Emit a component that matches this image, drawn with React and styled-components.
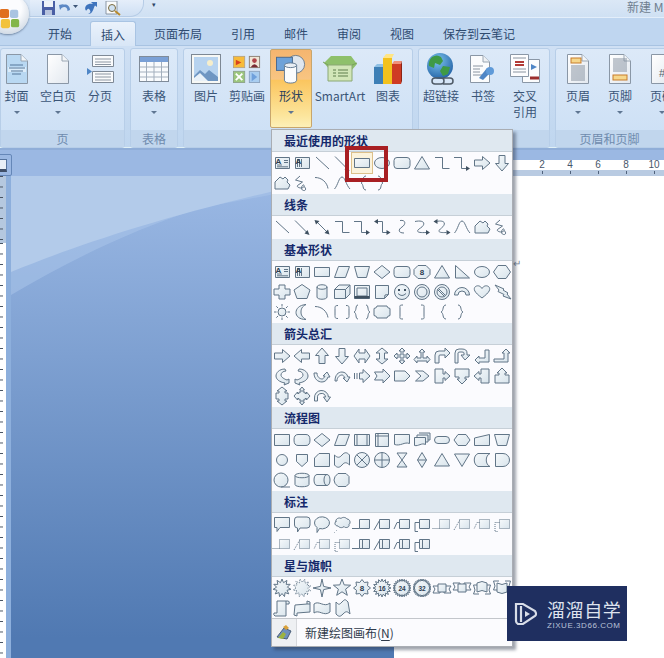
import React from 'react';
import styled, { createGlobalStyle, css } from 'styled-components';

const Global = createGlobalStyle`
  html, body { margin: 0; padding: 0; width: 664px; height: 658px; overflow: hidden; background: #7fa0cc; }
  * { box-sizing: border-box; }
`;
const FONT = `"Noto Sans CJK SC", "Noto Sans", sans-serif`;

const Window = styled.div`
  position: relative; width: 664px; height: 658px; overflow: hidden;
  display: flex; flex-direction: column; font: 12px/16px ${FONT}; color: #3d5674;
`;
const TitleBar = styled.div`
  height: 18px; flex: none; display: flex; align-items: flex-start; justify-content: space-between;
  background: linear-gradient(#dbe8f6, #cfe0f3); border-bottom: 1px solid #e3eefa; position: relative;
`;
const OfficeOrb = styled.div`
  position: absolute; left: -13px; top: -6px; width: 42px; height: 40px; border-radius: 50%;
  background: radial-gradient(circle at 50% 35%, #fbfcfe 40%, #d2dbe5 78%, #94a4b6 100%);
  box-shadow: 0 1px 2px rgba(60,80,110,.6); display: flex; align-items: center; justify-content: center;
  padding: 9px 0 0 3px; z-index: 3;
`;
const Qat = styled.div`
  margin-left: 30px; width: 114px; height: 17px; display: flex; align-items: center;
  background: linear-gradient(#e5eefa, #cedff3); border: 1px solid #b6cce6; border-left: none; border-top: none;
  border-radius: 0 0 14px 0; padding-left: 9px;
`;
const QatSlot = styled.span` display: flex; justify-content: center; width: ${p => p.$w}px; flex: none; `;
const TitleLeft = styled.div` display: flex; align-items: flex-start; `;
const QatMore = styled.div` margin: 1px 0 0 6px; width: 8px; color: #2e4566; font-size: 7px; line-height: 7px; text-align: center; `;
const TitleText = styled.div` color: #6f7e8f; font-size: 12px; line-height: 14px; width: 37px; white-space: nowrap; `;

const TabRow = styled.div`
  height: 28px; flex: none; display: flex; gap: 7px; padding: 3px 0 0 37px; background: #bfd6f0;
  border-bottom: 1px solid #a8c3e2;
`;
const Tab = styled.div`
  height: 25px; padding: 0 10px; display: flex; align-items: center; color: #2f4b70; white-space: nowrap;
  border: 1px solid transparent; border-bottom: none; border-radius: 3px 3px 0 0;
  ${p => p.$active && css`
    background: linear-gradient(#eaf2fb, #d7e5f6); border-color: #a9c4e3; margin-bottom: -1px; height: 26px;
  `}
`;
const Ribbon = styled.div`
  height: 102px; flex: none; display: flex; gap: 5px; padding: 2px 0 0; background: linear-gradient(#cfe0f4, #bfd6ef);
  border-bottom: 1px solid #dff0f6;
`;
const Group = styled.div`
  width: ${p => p.$w}px; height: 100px; flex: none; display: flex; flex-direction: column;
  border: 1px solid #b7cee8; border-radius: 3px; background: linear-gradient(#dce9f8, #cbdff5); overflow: hidden;
`;
const GroupBody = styled.div` height: 81px; flex: none; display: flex; padding-left: ${p => p.$pad || 0}px; `;
const GroupLabel = styled.div`
  flex: 1; background: #c1d6ed; color: #6f8bad; text-align: center; line-height: 17px; padding-right: ${p => p.$pr || 0}px;
`;
const RibbonButton = styled.div`
  width: ${p => p.$w}px; flex: none; height: 79px; display: flex; flex-direction: column; align-items: center; white-space: nowrap;
  padding-top: 2px; color: #3a5577; line-height: 16px; border: 1px solid transparent; border-radius: 2px;
  ${p => p.$on && css`
    border-color: #c8a66c;
    background: linear-gradient(#f5b56f 0%, #f8c582 38%, #fbc55e 39%, #fce59c 85%, #fdf0b8 100%);
    color: #2b3f5c;
  `}
`;
const IconBox = styled.div` height: 33px; display: flex; align-items: center; justify-content: center; flex: none; `;
const ButtonLabel = styled.div` text-align: center; margin-top: 3px; `;
const Caret = styled.div`
  margin-top: 7px; width: 0; height: 0; border: 3px solid transparent; border-top: 3px solid #5f7692; border-bottom: none;
`;

const Workspace = styled.div`
  flex: 1; position: relative; display: flex; flex-direction: column;
  background: linear-gradient(#a0bde8 0, #5079b2 490px);
`;
const WaveArt = styled.svg` position: absolute; left: 0; top: 28px; pointer-events: none; overflow: visible; `;
const TopBand = styled.div`
  height: 28px; flex: none; position: relative; background: #9bb8e3; border-top: 2px solid #90aed8;
`;
const Corner = styled.div`
  position: absolute; left: -1px; top: 4px; width: 13px; height: 22px; border: 1px solid #6587b8; border-radius: 0 2px 2px 0;
  display: flex; align-items: center;
`;
const CornerGlyph = styled.div` width: 7px; height: 13px; border: 1px solid #56749f; border-left: none; border-bottom: 3px solid #3f4f68; background: #e8eff7; `;
const HRuler = styled.div`
  position: absolute; left: 394px; right: 0; top: 10px; height: 10px; background: #fff; display: flex; padding-left: 134px;
`;
const HRulerLower = styled.div`
  position: absolute; left: 394px; right: 0; top: 20px; height: 6px; background: #b9cbe2; display: flex; padding-left: 134px;
`;
const HCell = styled.div`
  width: 28px; flex: none; text-align: center; font: 10px/10px "Liberation Sans", sans-serif; color: #47566a;
`;
const HTick = styled.div`
  width: 28px; flex: none; display: flex; justify-content: center;
  &::after { content: ""; width: 1px; height: 3px; margin-top: 1px; background: #50627c; }
`;
const DocRow = styled.div` flex: 1; display: flex; position: relative; `;
const VRuler = styled.div` width: 6px; flex: none; display: flex; flex-direction: column; `;
const rulerTicks = base => css`
  background-color: ${base};
  background-image: linear-gradient(#45505e 0 1px, transparent 1px);
  background-size: 3px 10.500px;
  background-repeat: repeat-y;
`;
const VRulerGray = styled.div` height: 67px; flex: none; ${rulerTicks('#b5c8df')} `;
const VRulerWhite = styled.div` flex: 1; ${rulerTicks('#fff')} `;
const Gutter = styled.div` flex: 1; position: relative; border-left: 5px solid #8dafdc; `;
const Page = styled.div` width: 270px; flex: none; background: #fff; position: relative; padding: 79px 0 0 119px; color: #7d8a99; font-size: 10px; line-height: 16px; `;

const Menu = styled.div`
  position: absolute; left: 271px; top: 129px; width: 242px; height: 518px; background: #fbfbfe;
  border: 1px solid #a9adb3; box-shadow: 3px 3px 3px rgba(40,50,70,.45); z-index: 5;
`;
const MenuHeader = styled.div`
  height: 22px; padding-left: 12px; font-weight: 700; line-height: 22px; color: #15296b; background: #dfe8f0;
  border-bottom: 1px solid #c6cfd7;
`;
const ShapeGrid = styled.div`
  display: grid; grid-template-columns: repeat(12, 20px); grid-auto-rows: 20px; padding: 1px 0; min-height: ${p => p.$min || 0}px;
`;
const ShapeCell = styled.div`
  width: 20px; height: 20px; display: flex; align-items: center; justify-content: center; position: relative;
  ${p => p.$hot && css`
    background: #fbf3dc; outline: 1px solid #dcc08a;
    &::before {
      content: ""; position: absolute; left: -7px; top: -7px; width: 35px; height: 28px; border: 4px solid #a81f23; z-index: 2;
    }
  `}
`;
const MenuFooter = styled.div`
  height: 28px; display: flex; align-items: stretch; border-top: 1px solid #c3c6cb; position: relative; top: -1px;
`;
const FooterIcon = styled.div` width: 25px; flex: none; background: #eef0f3; border-right: 1px solid #d6d8dc; display: flex; align-items: center; justify-content: center; `;
const FooterText = styled.div` padding-left: 8px; line-height: 28px; color: #2f3a4a; u { text-underline-offset: 2px; } `;

const Watermark = styled.div`
  position: absolute; left: 507px; top: 586px; width: 120px; height: 55px; background: #1f2f60; z-index: 6;
  display: flex; align-items: center; padding-left: 7px; gap: 8px;
`;
const MarkText = styled.div` display: flex; flex-direction: column; gap: 1px; color: #dfe4ef; `;
const MarkTitle = styled.div` font-size: 18px; line-height: 22px; letter-spacing: .6px; white-space: nowrap; `;
const MarkSub = styled.div` font: 8px/9px "Liberation Sans", sans-serif; letter-spacing: .55px; color: #b9c2d8; white-space: nowrap; `;

const ShapeSvg = styled.svg`
  display: block; overflow: visible; fill: url(#sf); stroke: #617587; stroke-width: 1; stroke-linejoin: miter;
`;
const Defs = styled.svg` position: absolute; width: 0; height: 0; `;

/* ---------- shape geometry: [filled outline, open lines, solid marks, tiny text, dotted] ---------- */
const star = (n, R, r, rot = 0) => {
  let d = '';
  for (let i = 0; i < n * 2; i++) {
    const a = rot + (Math.PI * i) / n - Math.PI / 2;
    const q = i % 2 ? r : R;
    d += `${i ? 'L' : 'M'}${(10 + q * Math.cos(a)).toFixed(1)} ${(10 + q * Math.sin(a)).toFixed(1)}`;
  }
  return d + 'z';
};
const dots = { strokeDasharray: '1 1' };
const CB = 'M7.5 5.5h10v9h-10z';
const TAILS = ['M7.5 14.5H0', 'M7.5 6.5L2 16', 'M7.5 8.5H5L2 15', 'M7.5 8.5H3v9h3'];

const S = {
  text: ['M3.5 4.5h14v11h-14z', 'M5 12h5M5 13.8h11M12 7.5h4M12 9.5h4', '', 'A'],
  vtext: ['M3.5 4.5h14v11h-14z', 'M5.5 6v8M7.5 6v8M9.5 6v8', '', 'A'],
  line: ['', 'M4 4L17 16'],
  arrow: ['', 'M3 3.5L15 15.5', 'M17.5 18l-5-1.5 3-3.5z'],
  dbl: ['', 'M5 5L15 15', 'M2.5 3l5 1-3.5 3.5zM17.5 17.5l-5-1.5 3.500-3.500z'],
  elbow: ['', 'M3 4.5h7.5v11h7'],
  elbowA: ['', 'M2 4.5h7.5v11h6', 'M18 15.5l-4-2.5v5z'],
  elbowD: ['', 'M5 4.5h5.5v11h5', 'M2 4.5l4-2.5v5zM18.5 15.5l-4-2.5v5z'],
  curved: ['', 'M8 3.5c6-1 6 4 2 6.5s-4 6 2 6'],
  curvedA: ['', 'M3 4.5c10-2 11 3 5.5 6.5s-3 5 5.5 4.5', 'M18 15.5l-4-2.5v5z'],
  curvedD: ['', 'M4 4.5c10-2 10 3 5.5 6.5s-3 5 5 4.5', 'M1.5 4.5l4-2.5v5zM18.5 15.5l-4-2.5v5z'],
  curve: ['', 'M2.5 16C6 12 7 4 10 4s4 8 8 12'],
  arc2: ['', 'M3 4.5c7 0 12 5 13 11'],
  free: ['M3 16V9l5-5 3 2 2-2 3 3-1 2 3 3-2 4z'],
  scrib: ['', 'M8 3L3.5 7l7 2-5 3.5c-2 2 7 4.5 6.5 0-.5-3-5 4-.5 5 3 .5 2.5-3 .5-4'],
  lbrace: ['', 'M14 3c-4 0-2 6-5 7 3 1 1 7 5 7'],
  rbrace: ['', 'M6 3c4 0 2 6 5 7-3 1-1 7-5 7'],
  rect: ['M2.5 5.5h15v9h-15z'],
  rectHot: ['M2.5 5.5h15v9h-15z'],
  ell: ['M2.5 10a7.5 5.5 0 1 0 15 0a7.5 5.5 0 1 0-15 0z'],
  round: ['M5 4.5h10a3 3 0 0 1 3 3v5a3 3 0 0 1-3 3H5a3 3 0 0 1-3-3v-5a3 3 0 0 1 3-3z'],
  tri: ['M10 3.5L17.5 16h-15z'],
  rarrow: ['M2.5 7h8V3.5L18 10l-7.5 6.500V13h-8z'],
  larrow: ['M17.5 7h-8V3.5L2 10l7.500 6.500V13h8z'],
  uarrow: ['M7 17.5v-8H3.5L10 2l6.500 7.500H13v8z'],
  darrow: ['M7 2.5v8H3.5L10 18l6.500-7.500H13v-8z'],
  lr: ['M7 3L2 10l5 7v-4h6v4l5-7-5-7v4H7z'],
  ud: ['M10 2l6 5h-3.500v6H16l-6 5-6-5h3.500V7H4z'],
  quad: ['M10 2l3 3h-2v4h4V7l3 3-3 3v-2h-4v4h2l-3 3-3-3h2v-4H5v2l-3-3 3-3v2h4V5H7z'],
  lru: ['M10 3l3 3h-2v6h4v-2l3 3.5-3 3.5v-2H5v2l-3-3.5L5 10v2h4V6H7z'],
  bent: ['M3 17V9q0-4 4-4h6V2l5 5-5 5V9H8q-1 0-1 1v7z'],
  uturn: ['M3 17V7q0-4 4-4h3q5 0 5 4v2h3l-5 5-4-5h3V7q0-1-2-1H8q-2 0-2 1v10z'],
  bleft: ['M3 14l4-4v2h6V4h4v12H7v2z'],
  bup: ['M2 13h10V7h-2l4-4 4 4h-2v9H2z'],
  cright: ['M13 3C7 3 4 7 4 10s3 6 9 7l-1 2 5-2 0-4-2 1c-3-1-6-3-6-5s2-4 5-4z'],
  cleft: ['M7 3c6 0 9 4 9 7s-3 6-9 7l1 2-5-2v-4l2 1c3-1 6-3 6-5S9 5 6 5z'],
  cup: ['M2 7c0 6 4 9 8 9 3 0 5-2 6-5h2l-3-5-4 4h2c-1 2-2 3-3 3-2 0-5-2-5-6z'],
  cdown: ['M3 15C3 9 6 6 10 6c3 0 5 2 6 5h2l-3 5-4-4h2c-1-2-2-3-3-3-2 0-5 2-5 6z'],
  stripe: ['M7.5 7H11V3.5L18 10l-7 6.500V13H7.5z', 'M2.5 7v6M5 7v6'],
  notch: ['M2.5 6H11V3l7 7-7 7v-3H2.5L5 10z'],
  home: ['M2.5 5H13l5 5-5 5H2.5z'],
  chev: ['M3.5 5H11l6 5-6 5H3.5L9 10z'],
  rcall: ['M3 3h8v5h2V5.5L18 10l-5 4.5V12h-2v5H3z'],
  dcall: ['M3 3h14v8h-4v2h2l-5 5-5-5h2v-2H3z'],
  lcall: ['M17 3H9v5H7V5.5L2 10l5 4.5V12h2v5h8z'],
  ucall: ['M3 17h14V9h-4V7h2l-5-5-5 5h2v2H3z'],
  udcall: ['M5 7h2V5H5l5-4 5 4h-2v2h3v6h-3v2h2l-5 4-5-4h2v-2H4V7z'],
  qcall: ['M7 6h2V4H7.5L10 1l2.5 3H11v2h2v1.5h1.5V6L18 10l-3.5 4v-1.5H13V14h-2v2h1.5L10 19l-2.500-3H9v-2H7v-1.5H5.5V14L2 10l3.500-4v1.5H7z'],
  circ: ['M2.5 15v-3a7 7 0 0 1 14-1h2l-3.500 5-3.500-5h2a4 4 0 0 0-8 1v3z'],
  para: ['M6.5 4.5h11L13.5 15.500h-11z'],
  trap: ['M2.5 4.5h15l-3 11h-9z'],
  diam: ['M10 3.5L18 10l-8 6.500L2 10z'],
  oct: ['M6 3.5h8L18 7.5v5L14 16.500H6L2 12.500v-5z', '', '', '8'],
  rtri: ['M3.5 3.5L17.5 16h-14z'],
  hex: ['M6 3.5h8L18.5 10 14 16.500H6L1.500 10z'],
  cross: ['M7 3h6v4h5v6h-5v4H7v-4H2V7h5z'],
  pent: ['M10 2.5L18 8l-3 8.500H5L2 8z'],
  can: ['M5 5c0-3 10-3 10 0v10c0 3-10 3-10 0z', 'M5 5c0 3 10 3 10 0'],
  cube: ['M2.5 7.5L7 3h11v9l-4.500 4.500h-11z', 'M2.5 7.5h11v9M13.5 7.5L18 3'],
  bevel: ['M2.5 3.5h15v13h-15z', 'M5 6h10v8H5z', 'M2.5 14h15v2.500h-15z'],
  fold: ['M3.5 3.5h13v9l-4 4h-9z', 'M16.5 12.5l-3.500 .5-.5 3.500'],
  smile: ['M2.5 10a7.500 7.500 0 1 0 15 0a7.500 7.500 0 1 0-15 0z', 'M6 11.5q4 4 8 0', 'M6 7h2v2H6zM12 7h2v2h-2z'],
  donut: ['M2.5 10a7.500 7.500 0 1 0 15 0a7.500 7.500 0 1 0-15 0z', 'M5 10a5 5 0 1 0 10 0a5 5 0 1 0-10 0z'],
  nosym: ['M2.5 10a7.500 7.500 0 1 0 15 0a7.500 7.500 0 1 0-15 0z', 'M5 10a5 5 0 1 0 10 0a5 5 0 1 0-10 0zM6.500 6.500l7 7M5.500 7.500l7 7'],
  barc: ['M2.5 13a7.500 7.500 0 0 1 15 0h-3.500a4 4 0 0 0-8 0z'],
  heart: ['M10 16C2 10 1 7 3.5 4.500 6 3 8.500 4 10 6.500 11.500 4 14 3 16.500 4.500 19 7 18 10 10 16z'],
  bolt: ['M3 3l9 4-1 1 5 3-1 1 4 5-8-3 1-1.500-6-3 1-1.500z'],
  sun: ['M6 10a4 4 0 1 0 8 0a4 4 0 1 0-8 0z', 'M10 2v2.500M10 15.500V18M2 10h2.500M15.500 10H18M4.300 4.300l1.800 1.800M13.900 13.900l1.800 1.800M4.300 15.700l1.800-1.800M13.900 6.100l1.800-1.800'],
  moon: ['M14 2.5C7 3 4 7 4 10.500s3 7 10 7C10 15 9 13 9 10s1-5.500 5-7.500z'],
  brackP: ['', 'M6 3.5c-3 0-3 1-3 3v7c0 2 0 3 3 3M14 3.5c3 0 3 1 3 3v7c0 2 0 3-3 3'],
  braceP: ['', 'M6 3c-3 0-1 6-4 7 3 1 1 7 4 7M14 3c3 0 1 6 4 7-3 1-1 7-4 7'],
  plaque: ['M5 4h10q0 2 3 2.500v7Q15 14 15 16H5q0-2-3-2.500v-7Q5 6 5 4z'],
  lb: ['', 'M11 3c-4 0-3 1-3 3v8c0 2-1 3 3 3'],
  rb: ['', 'M9 3c4 0 3 1 3 3v8c0 2 1 3-3 3'],
  froll: ['M2.5 4.5h15v11h-15z'],
  ftm: ['M6 4.5h8q4 0 4 5.500t-4 5.500H6q-4 0-4-5.500T6 4.500z'],
  pred: ['M2.5 4.5h15v11h-15z', 'M5 4.5v11M15 4.5v11'],
  intr: ['M3.5 3.5h13v13h-13z', 'M6 3.5v13M3.5 6h13'],
  doc: ['M2.5 4.5h15v9c-5-2-9 3-15 1z'],
  mdoc: ['M2.5 7.5h11v7c-4-2-7 2-11 1zM5 5v2.500M5 5h11v7h-2.500M7 3h11v7h-2'],
  term: ['M6 6.5h8a3.500 3.500 0 0 1 0 7H6a3.500 3.500 0 0 1 0-7z'],
  prep: ['M6 4.5h8l4 5.500-4 5.500H6L2 10z'],
  minp: ['M2.5 8L17.5 4.500v11h-15z'],
  mop: ['M2.5 4.5h15l-3 11h-9z'],
  cir: ['M4.5 10a5.500 5.500 0 1 0 11 0a5.500 5.500 0 1 0-11 0z'],
  off: ['M4.5 4.5h11v7L10 16.500l-5.500-5z'],
  card: ['M7 3.5h10.500v13h-15V8z'],
  tape: ['M2.5 5c3 3 5 3 7.500 0s5-3 7.500 0v10c-3-3-5-3-7.500 0s-5 3-7.500 0z'],
  sum: ['M2.5 10a7.500 7.500 0 1 0 15 0a7.500 7.500 0 1 0-15 0z', 'M4.700 4.700l10.600 10.600M15.300 4.700L4.700 15.300'],
  or: ['M2.5 10a7.500 7.500 0 1 0 15 0a7.500 7.500 0 1 0-15 0z', 'M10 2.500v15M2.500 10h15'],
  coll: ['M5 3h10L5 17h10z'],
  sort: ['M10 2.5l4.500 7.500-4.500 7.500L5.500 10z', 'M5.500 10h9'],
  ext: ['M10 3.5L17.5 16h-15z'],
  mrg: ['M2.5 4h15L10 16.500z'],
  stor: ['M6 3.5h12c-5 2-5 11 0 13H6c-5-2-5-11 0-13z'],
  delay: ['M3.5 3.5H11a6.500 6.500 0 0 1 0 13H3.500z'],
  seq: ['M2 10a7 7 0 1 0 14 0a7 7 0 1 0-14 0z', 'M9 17h9'],
  disk: ['M3 5.5c0-3 14-3 14 0v9c0 3-14 3-14 0z', 'M3 5.5c0 3 14 3 14 0'],
  dirA: ['M5 4.5h10c4 0 4 11 0 11H5c-4 0-4-11 0-11z', 'M15 4.5c-4 0-4 11 0 11'],
  disp: ['M6 3.5h8l3 3v7l-3 3H6q-4-3-4-6.500t4-6.500z'],
  wcR: ['M2.5 3.5h15v10H8L5 17.500v-4H2.500z'],
  wcRo: ['M5 3h10q3 0 3 3v5q0 3-3 3H8l-2.500 4v-4q-3 0-3-3V6q0-3 2.500-3z'],
  wcE: ['M2.5 9a7.500 6 0 1 1 5 5.500L5 18.500v-5A6 6 0 0 1 2.500 9z'],
  cloud: ['M4 8c-1-3 3-5 5-3.500 2-2 5-1 6 .5 3 0 4 4 2 5.500 1 3-4 4-5 2-2 2-5 1-6-.5-3 0-4-3-2-4.500z', 'M4 16.500l.5 0M2 18.500h.5'],
  ...Object.fromEntries(TAILS.flatMap((t, i) => [
    [`l${i + 1}`, [CB, t]],
    [`d${i + 1}`, [CB, t, '', '', 1]],
    [`c${i + 1}`, [CB, `${t}`, '', '', 1]],
    [`b${i + 1}`, [CB, `${t}M10.500 5.500v9`]],
  ])),
  ex1: [star(11, 9, 5.5)],
  ex2: [star(12, 9, 5.8, .3), '', '', '', 1],
  s4: [star(4, 9, 2.2)],
  s5: [star(5, 9, 3.8)],
  s8: [star(8, 8.5, 6), '', '', '8'],
  s16: [star(16, 9, 6.3), '', '', '16'],
  s24: [star(24, 9, 6.8), '', '', '24'],
  s32: [star(32, 9, 7), '', '', '32'],
  rib1: ['M6 6h8v8H6z', 'M6 8H1l2 3-2 4h7v-1M14 8h5l-2 3 2 4h-7v-1'],
  rib2: ['M6 6h8v8H6z', 'M6 12H1l2-3-2-4h7v1M14 12h5l-2-3 2-4h-7v1'],
  crib1: ['M5 5q5-3 10 0v9q-5-3-10 0z', 'M5 7H1.500L3 12 1.500 16H7M15 7h3.500L17 12l1.500 4H13'],
  crib2: ['M5 14q5 3 10 0V5q-5 3-10 0z', 'M5 12H1.500L3 8 1.500 3H7M15 12h3.500L17 8l1.500-5H13'],
  vscr: ['M5 3h11q2 0 1 3h-3v12H3q-2-1-1-3h3z', 'M14 6V3'],
  hscr: ['M3 7l12-1V3l3 1v10L5 15v3l-3-1z', 'M15 6h3'],
  wave: ['M2 6c5-4 10 4 16-1v9c-6 5-11-3-16 1z'],
  dwave: ['M4 4c3 3 3 3 6 0s3-3 6 0l2 12c-3-3-4-3-7 0s-4 3-7 0z'],
};

const sections = [
  ['最近使用的形状', ['text','vtext','line','arrow','HOT','ell','round','tri','elbow','elbowA','rarrow','darrow','free','scrib','arc2','curve','lbrace','rbrace']],
  ['线条', ['line','arrow','dbl','elbow','elbowA','elbowD','curved','curvedA','curvedD','curve','free','scrib'], 23],
  ['基本形状', ['text','vtext','rect','para','trap','diam','round','oct','tri','rtri','ell','hex','cross','pent','can','cube','bevel','fold','smile','donut','nosym','barc','heart','bolt','sun','moon','arc2','brackP','braceP','plaque','lb','rb','lbrace','rbrace']],
  ['箭头总汇', ['rarrow','larrow','uarrow','darrow','lr','ud','quad','lru','bent','uturn','bleft','bup','cright','cleft','cup','cdown','stripe','notch','home','chev','rcall','dcall','lcall','ucall','udcall','qcall','circ']],
  ['流程图', ['froll','ftm','diam','para','pred','intr','doc','mdoc','term','prep','minp','mop','cir','off','card','tape','sum','or','coll','sort','ext','mrg','stor','delay','seq','disk','dirA','disp']],
  ['标注', ['wcR','wcRo','wcE','cloud','l1','l2','l3','l4','d1','d2','d3','d4','c1','c2','c3','c4','b1','b2','b3','b4']],
  ['星与旗帜', ['ex1','ex2','s4','s5','s8','s16','s24','s32','rib1','rib2','crib1','crib2','vscr','hscr','wave','dwave']],
];

const Shape = ({ name }) => {
  const [f, l, k, t, dashed] = S[name] || [];
  const dash = dashed ? dots : undefined;
  const small = t && t.length > 1;
  return (
    <ShapeSvg width="20" height="20" viewBox="0 0 20 20" aria-hidden>
      {f && <path d={f} style={dash} />}
      {l && <path d={l} fill="none" style={dash} />}
      {k && <path d={k} fill="#3f5060" stroke="none" />}
      {t && (
        <text x={t === 'A' ? 6.5 : 10} y={t === 'A' ? 11 : 13} textAnchor="middle" fontFamily="Liberation Sans" fontWeight="700"
          fontSize={small ? 6.5 : 8} fill="#2c3c50" stroke="none">{t}</text>
      )}
    </ShapeSvg>
  );
};

/* ---------- ribbon pictures ---------- */
const Doc = ({ fill = '#fff', children, w = 24, h = 32 }) => (
  <svg width={w} height={h} viewBox="0 0 24 32">
    <defs><linearGradient id="dg" x1="0" y1="0" x2="1" y2="1"><stop offset="0" stopColor="#fff" /><stop offset="1" stopColor="#e2e8ef" /></linearGradient></defs>
    <path d="M1.5 1.5H16L22.5 8v22.5h-21z" fill={fill === '#fff' ? 'url(#dg)' : fill} stroke="#8a97a6" />
    <path d="M16 1.5V8h6.500" fill="#f2f5f8" stroke="#9aa6b3" />
    {children}
  </svg>
);
const textLines = (ys, x1 = 5, x2 = 19) => <path d={ys.map(y => `M${x1} ${y}H${x2}`).join('')} stroke="#8792a0" fill="none" />;

const icons = {
  cover: <Doc fill="#b9d8f2"><rect x="3" y="14" width="18" height="5" fill="#fff" opacity=".5" /><path d="M5 12h13M4 15h16M6 18h12M7 21h9" stroke="#55779a" fill="none" /></Doc>,
  blank: <Doc />,
  brk: (
    <svg width="28" height="30" viewBox="0 0 28 30">
      <path d="M1 14l5 3.500-5 3.500z" fill="#4f86c6" />
      <path d="M6.5 1.5h21v11h-21zM6.5 17.5h21v11h-21z" fill="#fafbfc" stroke="#7e8996" />
      <path d="M9 5h16M9 8h16M9 10.500h16M9 20h16M9 23h16M9 26h16" stroke="#8c96a2" />
    </svg>
  ),
  table: (
    <svg width="30" height="26" viewBox="0 0 30 26">
      <rect x=".5" y=".5" width="29" height="25" fill="#f9fbfd" stroke="#7f8b99" />
      <rect x="1" y="1" width="28" height="5" fill="#7aa0d6" />
      <path d="M1 11h28M1 16h28M1 21h28M7.5 6v19M15 6v19M22.5 6v19" stroke="#a3afbd" />
    </svg>
  ),
  picture: (
    <svg width="30" height="30" viewBox="0 0 30 30">
      <rect x=".5" y=".5" width="29" height="29" fill="#f7f8f5" stroke="#7d8894" />
      <rect x="3" y="3" width="24" height="24" fill="#b7d3ef" />
      <circle cx="19" cy="9" r="3" fill="#f6eecb" />
      <path d="M3 22l6-6 5 4 4-4 9 7v4H3z" fill="#6f96c2" />
      <path d="M3 24l6-5 8 8H3z" fill="#e9f1f8" />
    </svg>
  ),
  clip: (
    <svg width="30" height="28" viewBox="0 0 30 30">
      <rect x=".5" y="1.5" width="12" height="12" fill="#f7bb3a" stroke="#b9a47e" />
      <path d="M3 5l6 3-6 3z" fill="#d9431e" />
      <rect x="17.5" y="1.5" width="11" height="12" fill="#efe6d6" stroke="#8b7f72" />
      <circle cx="23" cy="6" r="2.500" fill="#b0444a" /><path d="M19 13q4-6 8 0z" fill="#7a2b33" />
      <rect x=".5" y="17.5" width="12" height="12" fill="#9cc67e" stroke="#8ea48a" />
      <path d="M3 20l7 7M10 20l-7 7" stroke="#fff" strokeWidth="2" />
      <rect x="17.5" y="17.5" width="11" height="12" fill="#a9cdf0" stroke="#8ca3bf" />
      <path d="M20 19l6 4.500-6 4.500z" fill="#6fa0dc" />
    </svg>
  ),
  shapes: (
    <svg width="30" height="30" viewBox="0 0 32 32">
      <circle cx="21" cy="11" r="9.500" fill="#dfe6ee" stroke="#6b7c8e" />
      <rect x=".5" y="3.5" width="17" height="14" fill="#6ea2d8" stroke="#49688d" />
      <path d="M9 12v16c0 4 13 4 13 0V12z" fill="#fbfcfd" stroke="#5f7890" />
      <ellipse cx="15.5" cy="12" rx="6.500" ry="2.500" fill="#e8eef4" stroke="#5f7890" />
    </svg>
  ),
  smart: (
    <svg width="36" height="28" viewBox="0 0 36 28">
      <path d="M2 8L9 1h20l6 8-6 7H9z" fill="#8ec06b" />
      <path d="M6 10h24v16H6z" fill="#d2e6b8" stroke="#8aa875" />
      <path d="M6 10L1 7M30 10l5-2" stroke="#79a25b" />
      <path d="M11 15h3M16 15h10M11 18h3M16 18h10M11 21h3M16 21h10" stroke="#5f7f4c" />
    </svg>
  ),
  chart: (
    <svg width="30" height="32" viewBox="0 0 30 32">
      <path d="M1 14h9v17H1z" fill="#3d7fb6" /><path d="M1 14l3-3h8l-2 3z" fill="#8fc0e4" />
      <path d="M10 5h9v26h-9z" fill="#f2c11d" /><path d="M10 5l3-4h8l-2 4z" fill="#ffe585" />
      <path d="M19 11h9v20h-9z" fill="#cf3b24" /><path d="M19 11l2-3h8l-1 3z" fill="#f0907a" /><path d="M28 11l1-3v20l-1 3z" fill="#8c2415" />
    </svg>
  ),
  globe: (
    <svg width="30" height="32" viewBox="0 0 30 32">
      <defs><radialGradient id="gl" cx=".4" cy=".3" r=".8"><stop offset="0" stopColor="#7cc4ee" /><stop offset="1" stopColor="#1c5aa0" /></radialGradient></defs>
      <circle cx="14" cy="13" r="13" fill="url(#gl)" />
      <path d="M6 4q5-3 9 0l2 4-3 4-5-2-1 5-5-2q-1-5 3-9zM17 13l7 1-2 7-5 2-3-5z" fill="#3f9a45" />
      <path d="M9 25h6a3 3 0 0 1 0 6H9a3 3 0 0 1 0-6zM17 25h7a3 3 0 0 1 0 6h-7" fill="none" stroke="#4f5a66" strokeWidth="1.500" />
    </svg>
  ),
  mark: (
    <svg width="28" height="30" viewBox="0 0 28 30">
      <path d="M1.5 1.5H14L20.5 8v20.500h-19z" fill="#fbfcfd" stroke="#8a97a6" />
      <path d="M14 1.5V8h6.500" fill="#eef1f4" stroke="#9aa6b3" />
      <path d="M4 12h10M4 15h7M4 18h7M4 21h9" stroke="#8a94a0" />
      <path d="M10 24l8-10 4 4-8 8z" fill="#4f86c6" />
      <circle cx="21" cy="17" r="4" fill="#5f9ad8" />
    </svg>
  ),
  xref: (
    <svg width="30" height="30" viewBox="0 0 30 30">
      <path d="M12.5 5.5h17v23h-17z" fill="#fbfcfd" stroke="#8a97a6" />
      <path d="M20 24h9" stroke="#9a2d2d" strokeWidth="3" />
      <path d="M.5 .5h18v22h-18z" fill="#fdfdfe" stroke="#8a97a6" />
      <path d="M3 4h13M3 15h13M3 18h13" stroke="#8a94a0" />
      <path d="M5 8h9M5 11h9" stroke="#b23a36" strokeWidth="2" />
      <path d="M21 10l6 3-6 3z" fill="#4f86c6" />
    </svg>
  ),
  head: <Doc><rect x="5" y="5" width="10" height="5" fill="#f6d78b" stroke="#c77c2a" />{textLines([13, 15, 17, 19, 21, 23, 25, 27])}</Doc>,
  foot: <Doc>{textLines([6, 8, 10, 12, 14, 16, 18])}<rect x="5" y="22" width="14" height="5" fill="#f6d78b" stroke="#c77c2a" /></Doc>,
  num: <Doc><text x="12" y="24" fontSize="11" textAnchor="middle" fontFamily="Liberation Sans" fill="#55616e">#</text></Doc>,
};

const Btn = ({ w, icon, label, on, caret = true }) => (
  <RibbonButton $w={w} $on={on}>
    <IconBox>{icons[icon]}</IconBox>
    <ButtonLabel>{label}</ButtonLabel>
    {caret && <Caret />}
  </RibbonButton>
);

const tabs = ['开始', '插入', '页面布局', '引用', '邮件', '审阅', '视图', '保存到云笔记'];

export default function App() {
  return (
    <Window>
      <Global />
      <Defs aria-hidden>
        <defs>
          <linearGradient id="sf" x1="0" y1="0" x2="1" y2="1">
            <stop offset="0" stopColor="#f6f9fb" />
            <stop offset="1" stopColor="#d8e4ec" />
          </linearGradient>
        </defs>
      </Defs>

      <TitleBar>
        <OfficeOrb>
          <svg width="24" height="22" viewBox="0 0 24 24">
            <rect x="1" y="1" width="10" height="10" rx="2" fill="#e0701f" />
            <rect x="12" y="2" width="9" height="9" rx="2" fill="#a9c4e2" />
            <rect x="2" y="12" width="10" height="10" rx="2" fill="#f2c23b" />
            <rect x="13" y="12" width="9" height="9" rx="2" fill="#83b64a" />
          </svg>
        </OfficeOrb>
        <TitleLeft>
          <Qat>
            <QatSlot $w={18}>
              <svg width="15" height="14" viewBox="0 0 15 14"><path d="M1 0h13v14H1z" fill="#4a5fa5" /><path d="M3 0h9v6H3z" fill="#eef2f8" /><path d="M4 9h7v5H4z" fill="#b8c4de" /></svg>
            </QatSlot>
            <QatSlot $w={22}>
              <svg width="22" height="12" viewBox="0 0 22 12"><path d="M7 2L2 3l1 5 1.500-2c3-2 6-1 6 3l2.500-1C13 3 8 1 5 3.500z" fill="#5b87c4" /><path d="M16 3h5l-2.500 3z" fill="#3f5678" /></svg>
            </QatSlot>
            <QatSlot $w={24}>
              <svg width="14" height="14" viewBox="0 0 14 14"><path d="M7 1h6v5l-2-1.500C9 8 9 13 4 13c3-1 3-3 1-5C3 7 3 11 1.500 9 0 5 4 2 9 3z" fill="#3f74bd" /></svg>
            </QatSlot>
            <QatSlot $w={20}>
              <svg width="16" height="15" viewBox="0 0 16 15"><path d="M1 0h11v13H1z" fill="#fafbfc" stroke="#8a97a6" /><circle cx="7" cy="7" r="3.500" fill="#cfe1f2" stroke="#7a6a3c" /><path d="M10 10l5 4" stroke="#b88a2c" strokeWidth="2" /></svg>
            </QatSlot>
          </Qat>
          <QatMore>▾</QatMore>
        </TitleLeft>
        <TitleText>新建 M</TitleText>
      </TitleBar>

      <TabRow>
        {tabs.map((t, i) => <Tab key={t} $active={i === 1}>{t}</Tab>)}
      </TabRow>

      <Ribbon>
        <Group $w={125}>
          <GroupBody>
            <Btn w={31} icon="cover" label="封面" />
            <Btn w={52} icon="blank" label="空白页" />
            <Btn w={32} icon="brk" label="分页" caret={false} />
          </GroupBody>
          <GroupLabel>页</GroupLabel>
        </Group>
        <Group $w={48}>
          <GroupBody $pad={1}><Btn w={44} icon="table" label="表格" /></GroupBody>
          <GroupLabel>表格</GroupLabel>
        </Group>
        <Group $w={230}>
          <GroupBody $pad={4}>
            <Btn w={36} icon="picture" label="图片" caret={false} />
            <Btn w={46} icon="clip" label="剪贴画" caret={false} />
            <Btn w={42} icon="shapes" label="形状" on />
            <Btn w={56} icon="smart" label="SmartArt" caret={false} />
            <Btn w={40} icon="chart" label="图表" caret={false} />
          </GroupBody>
          <GroupLabel />
        </Group>
        <Group $w={132}>
          <GroupBody>
            <Btn w={44} icon="globe" label="超链接" caret={false} />
            <Btn w={40} icon="mark" label="书签" caret={false} />
            <Btn w={44} icon="xref" label={<>交叉<br />引用</>} caret={false} />
          </GroupBody>
          <GroupLabel />
        </Group>
        <Group $w={127}>
          <GroupBody $pad={1}>
            <Btn w={42} icon="head" label="页眉" />
            <Btn w={42} icon="foot" label="页脚" />
            <Btn w={42} icon="num" label="页码" />
          </GroupBody>
          <GroupLabel $pr={18}>页眉和页脚</GroupLabel>
        </Group>
      </Ribbon>

      <Workspace>
        <WaveArt width="394" height="482" viewBox="0 0 394 482" aria-hidden>
          <path d="M11 119C70 84 130 55 200 32L394 -4V0H11z" fill="#a9c4ea" opacity=".55" />
          <path d="M11 96C70 72 150 44 270 16L394 -10V0H11z" fill="#b3cbea" />
        </WaveArt>
        <TopBand>
          <Corner><CornerGlyph /></Corner>
          <HRuler>{[2, 4, 6, 8, 10].map(n => <HCell key={n}>{n}</HCell>)}</HRuler>
          <HRulerLower>{[2, 4, 6, 8, 10].map(n => <HTick key={n} />)}</HRulerLower>
        </TopBand>
        <DocRow>
          <VRuler>
            <VRulerGray />
            <VRulerWhite />
          </VRuler>
          <Gutter />
          <Page>↵</Page>
        </DocRow>
      </Workspace>

      <Menu>
        {sections.map(([title, items, min]) => (
          <section key={title}>
            <MenuHeader>{title}</MenuHeader>
            <ShapeGrid $min={min}>
              {items.map((n, i) => (
                <ShapeCell key={i} $hot={n === 'HOT'}>
                  <Shape name={n === 'HOT' ? 'rectHot' : n} />
                </ShapeCell>
              ))}
            </ShapeGrid>
          </section>
        ))}
        <MenuFooter>
          <FooterIcon>
            <svg width="18" height="17" viewBox="0 0 18 17">
              <path d="M2 13L9 4l7 3-4 8z" fill="#6f8fbd" stroke="#4b5d78" />
              <path d="M8 3l3-2 3 3-3 2z" fill="#d9a13b" />
              <path d="M3 14l5-6 3 2-3 5z" fill="#9db33f" />
            </svg>
          </FooterIcon>
          <FooterText>新建绘图画布(<u>N</u>)</FooterText>
        </MenuFooter>
      </Menu>

      <Watermark>
        <svg width="25" height="26" viewBox="0 0 25 26">
          <path d="M2 3h7l12 7q2 3 0 5l-12 8H4q-2-1-2-3z" fill="none" stroke="#d8dde8" strokeWidth="2.200" />
          <path d="M7 5v16" stroke="#d8dde8" strokeWidth="2.200" />
          <path d="M11 10l5 3-5 3z" fill="#d8dde8" />
        </svg>
        <MarkText>
          <MarkTitle>溜溜自学</MarkTitle>
          <MarkSub>ZIXUE.3D66.COM</MarkSub>
        </MarkText>
      </Watermark>
    </Window>
  );
}
